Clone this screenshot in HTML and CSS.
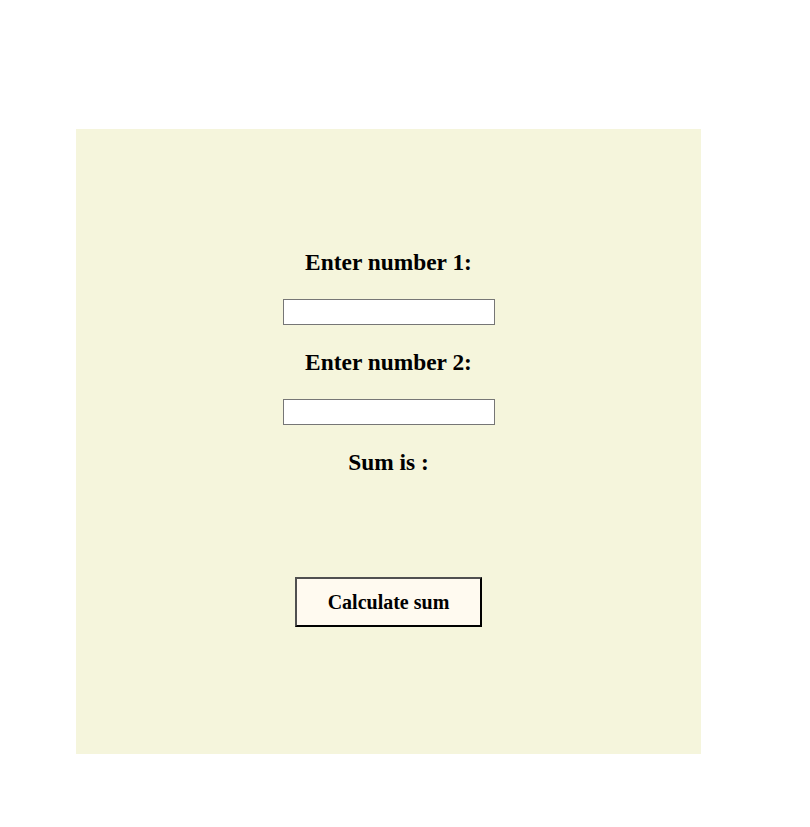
FILE: index.html
```html
<!DOCTYPE html>
<html>
<head>
<meta charset="utf-8">
<link rel="stylesheet" href="styles.css">
</head>
<body>
<div class="box">
  <h3 class="label">Enter number 1:</h3>
  <input class="num" type="text">
  <h3 class="label">Enter number 2:</h3>
  <input class="num" type="text">
  <h3 class="label">Sum is :</h3>
  <button class="calc">Calculate sum</button>
</div>
</body>
</html>
```

FILE: styles.css
```css
html, body {
  margin: 0;
  padding: 0;
  background: #ffffff;
}
body {
  font-family: "Liberation Serif", "Times New Roman", serif;
}
.box {
  box-sizing: border-box;
  width: 625px;
  height: 625px;
  margin: 129px 0 0 76px;
  padding-top: 119.5px;
  background: #f5f5dc;
  display: flex;
  flex-direction: column;
  align-items: center;
  gap: 24px;
}
.label {
  margin: 0;
  font-size: 23.4px;
  line-height: 26px;
  font-weight: bold;
  color: #000;
}
.num {
  box-sizing: border-box;
  width: 212px;
  height: 26px;
  margin: 0;
  padding: 1px 2px;
  border: 1px solid #767676;
  background: #ffffff;
}
.calc {
  box-sizing: border-box;
  width: 187px;
  height: 50px;
  margin-top: 78.5px;
  padding: 0;
  border: 2px solid;
  border-color: #505050 #000 #000 #505050;
  background: #fffaf0;
  font-family: "Liberation Serif", "Times New Roman", serif;
  font-size: 20px;
  font-weight: bold;
  color: #000;
}
```
